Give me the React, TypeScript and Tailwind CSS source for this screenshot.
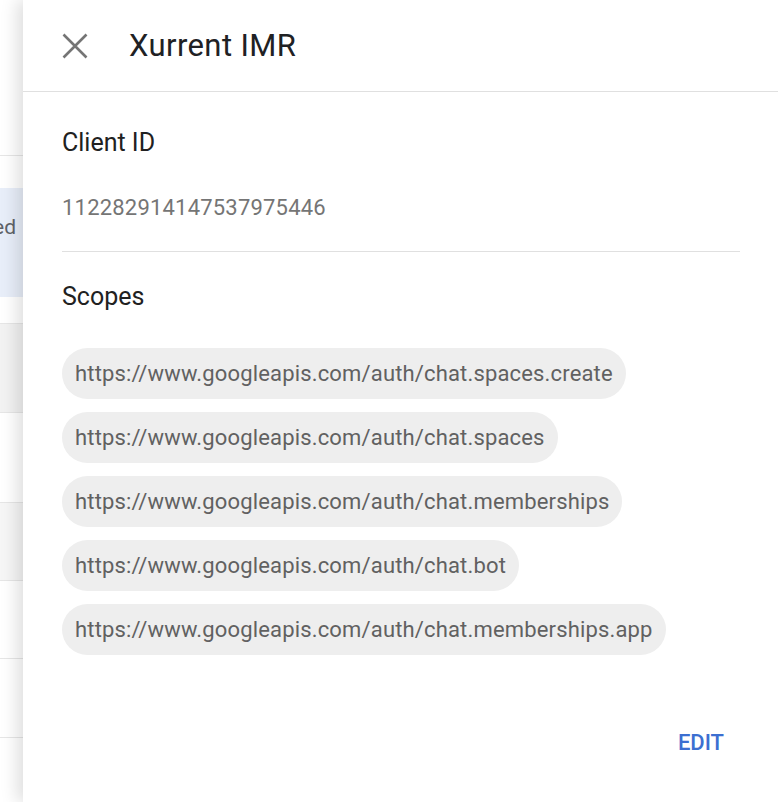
const scopes = [
  "https://www.googleapis.com/auth/chat.spaces.create",
  "https://www.googleapis.com/auth/chat.spaces",
  "https://www.googleapis.com/auth/chat.memberships",
  "https://www.googleapis.com/auth/chat.bot",
  "https://www.googleapis.com/auth/chat.memberships.app",
];

// rows of the list page sitting behind the drawer
const backdropRows = [
  { h: 155, cls: "bg-white" },
  { h: 33, cls: "bg-white border-t border-[#e6e6e6]" },
  { h: 109, cls: "bg-[#e8eef9]", text: "ed" },
  { h: 26, cls: "bg-white" },
  { h: 89, cls: "bg-[#f2f2f2] border-t border-[#e6e6e6]" },
  { h: 90, cls: "bg-white border-t border-[#e6e6e6]" },
  { h: 78, cls: "bg-[#f6f6f6] border-t border-[#e6e6e6]" },
  { h: 78, cls: "bg-white border-t border-[#e6e6e6]" },
  { h: 79, cls: "bg-white border-t border-[#e6e6e6]" },
  { h: 65, cls: "bg-white border-t border-[#e6e6e6]" },
];

function Backdrop() {
  return (
    <div className="w-[23px] shrink-0 overflow-hidden flex flex-col">
      {backdropRows.map((r, i) => (
        <div
          key={i}
          className={`shrink-0 flex items-center justify-end ${r.cls}`}
          style={{ height: r.h }}
        >
          {r.text && <span className="text-[21px] text-[#5f6368] whitespace-nowrap pr-[7px] -mt-[30px]">{r.text}</span>}
        </div>
      ))}
    </div>
  );
}

function CloseIcon() {
  return (
    <svg width="26" height="26" viewBox="0 0 26 26" className="shrink-0">
      <path d="M1.5 1.5 L24.5 24.5 M24.5 1.5 L1.5 24.5" stroke="#757575" strokeWidth="2.6" strokeLinecap="butt" />
    </svg>
  );
}

export default function App() {
  return (
    <div
      className="h-[802px] w-[778px] flex bg-white overflow-hidden"
      style={{ fontFamily: "Roboto, 'Liberation Sans', sans-serif" }}
    >
      <Backdrop />
      <div className="relative z-10 flex-1 flex flex-col bg-white shadow-[-6px_0_16px_rgba(0,0,0,0.13)]">
        <header className="h-[92px] shrink-0 flex items-center gap-[41px] pl-[39px] border-b border-[#e0e0e0]">
          <CloseIcon />
          <h1 className="text-[31px] leading-[36px] tracking-[0.4px] text-[#202124]">Xurrent IMR</h1>
        </header>

        <main className="flex-1 pl-[39px] pr-[38px]">
          <h2 className="mt-[37px] text-[25px] leading-[28px] text-[#212121]">Client ID</h2>
          <p className="mt-[39px] text-[22px] leading-[24px] tracking-[0.2px] text-[#757575]">112282914147537975446</p>
          <div className="mt-[31px] border-t border-[#e0e0e0]" />

          <h2 className="mt-[31px] text-[25px] leading-[28px] text-[#212121]">Scopes</h2>
          <div className="mt-[37px] flex flex-col items-start gap-[13px]">
            {scopes.map((s) => (
              <span
                key={s}
                className="h-[51px] flex items-center rounded-full bg-[#eeeeee] px-[13px] text-[22px] tracking-[0.16px] text-[#616161]"
              >
                {s}
              </span>
            ))}
          </div>
        </main>

        <footer className="flex justify-end pr-[54px] pb-[47px]">
          <button className="text-[22px] leading-[24px] font-medium text-[#3c6fd1]">EDIT</button>
        </footer>
      </div>
    </div>
  );
}
